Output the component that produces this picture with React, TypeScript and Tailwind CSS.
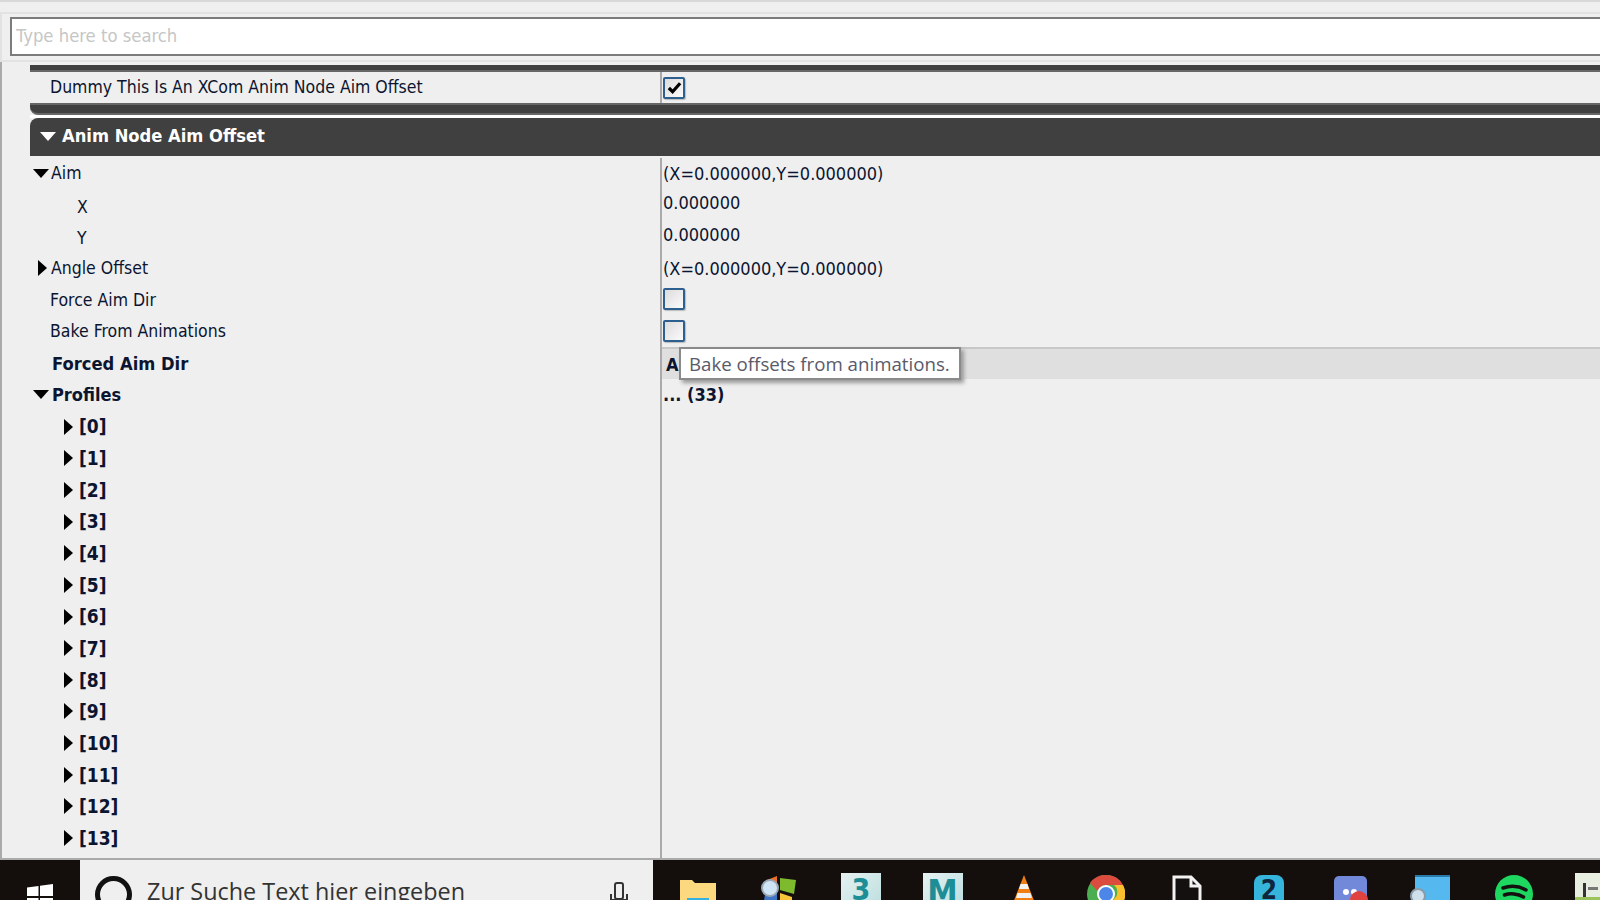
import type { FC, ReactNode } from 'react';

const Down: FC<{ className?: string; fill?: string }> = ({ className, fill = '#000' }) => (
  <svg viewBox="0 0 16 9" width="16" height="9" className={className}>
    <path d="M0 0H16L8 9Z" fill={fill} />
  </svg>
);

const Right: FC<{ className?: string }> = ({ className }) => (
  <svg viewBox="0 0 9 16" width="9" height="16" className={className}>
    <path d="M0 0L9 8L0 16Z" fill="#000" />
  </svg>
);

const Check: FC<{ checked?: boolean }> = ({ checked }) => (
  <div className="flex h-[22px] w-[22px] items-center justify-center rounded-[2px] border-2 border-[#2d5f8f] bg-gradient-to-br from-[#dcdcdc] to-[#fbfbfb] shadow-[1px_1px_1px_#bbb]">
    {checked && (
      <svg viewBox="0 0 16 16" width="15" height="15">
        <path d="M2 8.5L6 12.5L14 3.5" fill="none" stroke="#000" strokeWidth="3.500" />
      </svg>
    )}
  </div>
);

const Row: FC<{ label: ReactNode; value?: ReactNode; valueClass?: string }> = ({ label, value, valueClass = '' }) => (
  <div className="grid h-[31.67px] shrink-0 grid-cols-[660px_1fr]">
    <div className="flex items-center border-r-2 border-[#aaaaaa] text-[17.500px]">{label}</div>
    <div className={`relative flex items-center pl-[1px] ${valueClass}`}>{value}</div>
  </div>
);

const profiles = ['0', '1', '2', '3', '4', '5', '6', '7', '8', '9', '10', '11', '12', '13'];

const TaskIcon: FC<{ children: ReactNode; top?: string }> = ({ children, top = 'pt-[15px]' }) => (
  <div className={`flex w-[81.6px] shrink-0 justify-center ${top}`}>{children}</div>
);

export default function App() {
  return (
    <div className="flex h-[900px] w-[1600px] flex-col overflow-hidden bg-[#efefef] font-['DejaVu_Sans_Condensed','DejaVu_Sans',sans-serif] text-[18px] text-[#0c1530]">
      {/* search bar */}
      <div className="h-[12px] shrink-0 border-t-2 border-[#d8d8d8]" />
      <div className="h-[50px] shrink-0 border-y-2 border-l-2 border-[#e2e2e2] pl-[8px] pt-[3px]">
        <input
          placeholder="Type here to search"
          className="h-[39px] w-[1600px] border-2 border-[#7c7c7c] bg-white pb-[3px] pl-[4px] text-[18.300px] outline-none placeholder:text-[#c6c6c6]"
        />
      </div>

      <div className="flex min-h-0 flex-1 flex-col border-b-2 border-l-2 border-[#aaaaaa] pl-[28px]">
        <div className="mt-[3px] h-[7px] shrink-0 border-b-2 border-[#666666] bg-[#404040]" />
        <div className="-ml-[28px] grid h-[31px] shrink-0 grid-cols-[632px_1fr] pl-[28px]">
          <div className="flex items-center border-r-2 border-[#aaaaaa] pl-[20px] text-[17.500px]">Dummy This Is An XCom Anim Node Aim Offset</div>
          <div className="flex items-center pl-[1px]">
            <Check checked />
          </div>
        </div>
        <div className="h-[12px] shrink-0 rounded-bl-[8px] border-y-2 border-[#666666] bg-[#404040]" />
        <div className="h-[3px] shrink-0 bg-white" />
        <div className="flex h-[38px] shrink-0 items-center rounded-tl-[8px] bg-[#404040] pb-[2px] pl-[10px] text-[18.200px] font-bold text-white">
          <Down fill="#fff" className="mr-[6px] mt-[1px]" />
          Anim Node Aim Offset
        </div>

        <div className="-ml-[28px] flex min-h-0 flex-1 flex-col pt-[1.5px]">
          <Row
            label={
              <>
                <Down className="ml-[31px] mr-[2px]" />
                Aim
              </>
            }
            value="(X=0.000000,Y=0.000000)"
          />
          <Row label={<span className="pl-[75px]">X</span>} value="0.000000" valueClass="pb-[8px]" />
          <Row label={<span className="pl-[75px]">Y</span>} value="0.000000" valueClass="pb-[8px]" />
          <Row
            label={
              <>
                <Right className="ml-[36px] mr-[4px]" />
                Angle Offset
              </>
            }
            value="(X=0.000000,Y=0.000000)"
          />
          <Row label={<span className="pl-[48px]">Force Aim Dir</span>} value={<Check />} valueClass="pb-[2px]" />
          <Row label={<span className="pl-[48px]">Bake From Animations</span>} value={<Check />} valueClass="pb-[2px]" />
          <Row
            label={<span className="pl-[50px] text-[18.200px] font-bold">Forced Aim Dir</span>}
            valueClass="bg-[#dfdfdf] border-t-2 border-[#c8c8c8]"
            value={
              <>
                <span className="pl-[3px] font-bold">A</span>
                <div className="absolute -top-[2px] left-[17px] z-10 flex h-[33px] w-[282px] items-center border-2 border-[#8a8a8a] bg-white pl-[8px] font-['Open_Sans',sans-serif] text-[18.700px] text-[#5a5a6a] shadow-[3px_3px_4px_#9a9a9a]">
                  Bake offsets from animations.
                </div>
              </>
            }
          />
          <Row
            label={
              <>
                <Down className="ml-[31px] mr-[3px]" />
                <span className="text-[18px] font-bold">Profiles</span>
              </>
            }
            value={<span className="font-bold">... (33)</span>}
          />
          {profiles.map((p) => (
            <Row
              key={p}
              label={
                <>
                  <Right className="ml-[62px] mr-[6px]" />
                  <span className="text-[19px] font-bold">[{p}]</span>
                </>
              }
            />
          ))}
          <div className="grid min-h-0 flex-1 grid-cols-[660px_1fr]">
            <div className="border-r-2 border-[#aaaaaa]" />
          </div>
        </div>
      </div>

      {/* windows taskbar */}
      <div className="flex h-[40px] shrink-0 overflow-hidden bg-[#140e0c]">
        <div className="flex w-[80px] shrink-0 justify-center pt-[24px]">
          <svg viewBox="0 0 26 26" width="26" height="26" fill="#fff">
            <path d="M0 3.500L11.500 2V12H0ZM13 1.800L26 0V12H13ZM0 14H11.500V24L0 22.500ZM13 14H26V26L13 24.200Z" />
          </svg>
        </div>
        <div className="flex h-[40px] w-[573px] shrink-0 bg-[#efefef] pl-[15px]">
          <div className="mt-[16px] h-[37px] w-[37px] shrink-0 rounded-full border-[5px] border-[#111]" />
          <div className="ml-[15px] whitespace-nowrap pt-[11px] font-['Open_Sans',sans-serif] text-[23.400px] leading-[40px] text-[#333]">
            Zur Suche Text hier eingeben
          </div>
          <svg viewBox="0 0 18 30" width="18" height="30" className="ml-auto mr-[25px] mt-[22px] shrink-0" fill="none" stroke="#333" strokeWidth="2">
            <rect x="5" y="1" width="8" height="16" rx="2" />
            <path d="M1 12V18H17V12M9 18V26" />
          </svg>
        </div>
        <div className="w-[4px] shrink-0" />

        <TaskIcon top="pt-[18px]">
          <svg viewBox="0 0 36 30" width="36" height="30">
            <path d="M0 2H12L15 5H36V30H0Z" fill="#fcd87e" />
            <rect x="7" y="20" width="22" height="10" fill="#36b0e0" />
          </svg>
        </TaskIcon>
        <TaskIcon top="pt-[14px]">
          <svg viewBox="0 0 38 34" width="38" height="34">
            <path d="M7 6L17 2V16L7 18Z" fill="#e8702a" />
            <path d="M20 4L36 6L34 20L20 16Z" fill="#7dba2e" />
            <path d="M20 19L32 23V34H20Z" fill="#f7c43a" />
            <path d="M5 20L17 19V34H3Z" fill="#3f75c7" />
            <circle cx="10" cy="14" r="8" fill="#cfe5f5" stroke="#9aa7b5" strokeWidth="2" />
          </svg>
        </TaskIcon>
        <TaskIcon top="pt-[13px]">
          <div className="flex h-[40px] w-[40px] justify-center bg-gradient-to-br from-[#e6f2f2] to-[#b9dcdc] text-[30px] font-bold leading-[34px] text-[#1d8d96]">3</div>
        </TaskIcon>
        <TaskIcon top="pt-[13px]">
          <div className="flex h-[40px] w-[40px] justify-center bg-gradient-to-br from-[#e6f2f2] to-[#b9dcdc] text-[34px] font-bold leading-[38px] text-[#1d8d96]">M</div>
        </TaskIcon>
        <TaskIcon>
          <svg viewBox="0 0 28 30" width="28" height="30">
            <path d="M14 0L25 28H3Z" fill="#f07f13" />
            <path d="M10.500 9H17.500L19 14H9ZM7.500 18H20.500L22 23H6Z" fill="#f2f2f2" />
          </svg>
        </TaskIcon>
        <TaskIcon>
          <svg viewBox="0 0 38 38" width="38" height="38">
            <circle cx="19" cy="19" r="19" fill="#4bae50" />
            <path d="M19 0A19 19 0 0 1 36 10H19A9 9 0 0 0 10.500 16L3 8A19 19 0 0 1 19 0Z" fill="#dc4c3e" />
            <path d="M36 10A19 19 0 0 1 19 38L27 24A9 9 0 0 0 27 10Z" fill="#fbc02d" />
            <circle cx="19" cy="19" r="9" fill="#fff" />
            <circle cx="19" cy="19" r="7" fill="#4b86e8" />
          </svg>
        </TaskIcon>
        <TaskIcon>
          <svg viewBox="0 0 30 36" width="30" height="36">
            <path d="M2 2H19L28 11V36H2Z" fill="#141010" stroke="#f2f2f2" strokeWidth="3" />
            <path d="M19 2V11H28" fill="none" stroke="#f2f2f2" strokeWidth="3" />
          </svg>
        </TaskIcon>
        <TaskIcon>
          <div className="flex h-[34px] w-[30px] justify-center rounded-t-[8px] bg-[#35b4dc] text-[26px] font-bold leading-[30px] text-[#10243c]">2</div>
        </TaskIcon>
        <TaskIcon top="pt-[16px]">
          <div className="relative h-[34px] w-[33px] rounded-[5px] bg-[#7289da]">
            <div className="absolute left-[9px] top-[13px] h-[6px] w-[6px] rounded-full bg-white" />
            <div className="absolute left-[17px] top-[13px] h-[6px] w-[6px] rounded-full bg-white" />
            <div className="absolute left-[16px] top-[15px] h-[18px] w-[18px] rounded-full bg-[#e0433f]" />
          </div>
        </TaskIcon>
        <TaskIcon>
          <div className="relative h-[34px] w-[35px] border-t-2 border-[#2878a8] bg-[#55b8ee]">
            <div className="absolute -left-[5px] top-[11px] h-[16px] w-[16px] rounded-full border-2 border-[#8a9aa8] bg-[#cfe0ec]" />
          </div>
        </TaskIcon>
        <TaskIcon>
          <svg viewBox="0 0 38 38" width="38" height="38">
            <circle cx="19" cy="19" r="19" fill="#1ed760" />
            <path d="M8 13C15 10.500 24 11 31 15M9.500 20C15 18 23 18.500 28.500 22" fill="none" stroke="#141010" strokeWidth="3.500" strokeLinecap="round" />
          </svg>
        </TaskIcon>
        <TaskIcon top="pt-[13px]">
          <div className="relative h-[40px] w-[40px] bg-[#e8efe0]">
            <div className="absolute left-[8px] top-[10px] h-[16px] w-[3px] bg-[#333]" />
            <div className="absolute left-[13px] top-[14px] h-[3px] w-[10px] bg-[#777]" />
            <div className="absolute bottom-0 left-0 h-[16px] w-full bg-[#9cc45a]" />
          </div>
        </TaskIcon>
      </div>
    </div>
  );
}
